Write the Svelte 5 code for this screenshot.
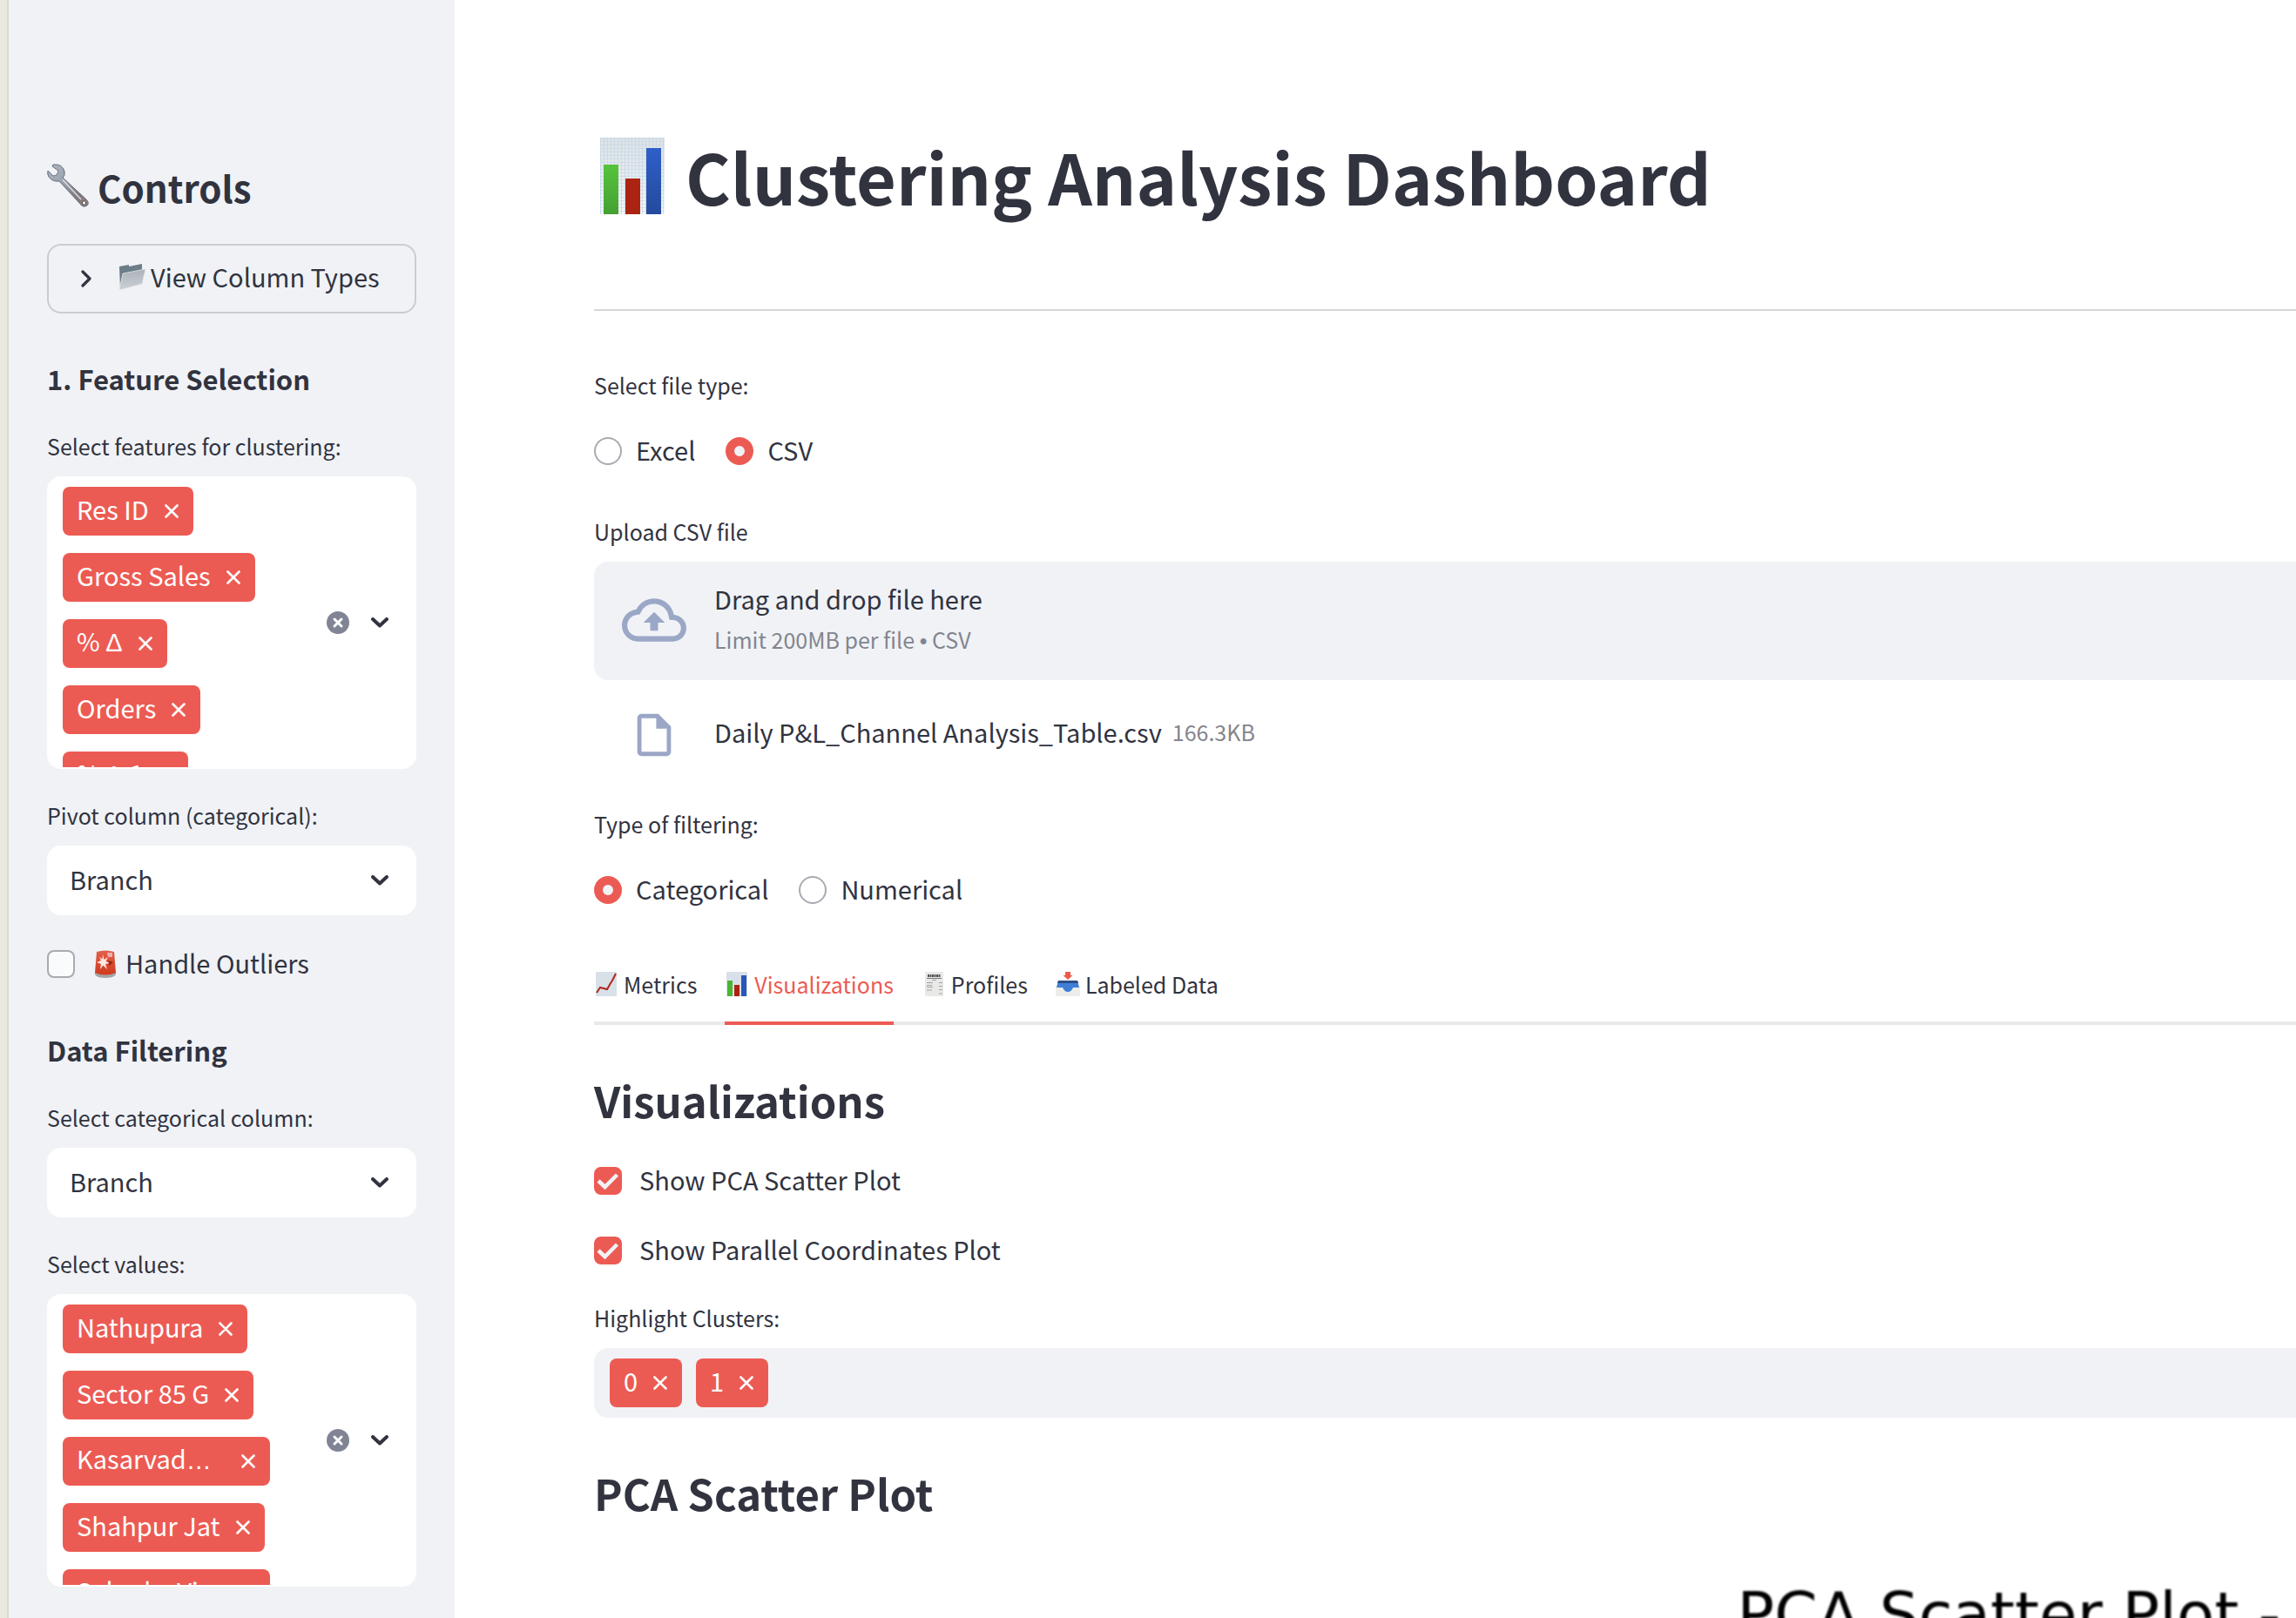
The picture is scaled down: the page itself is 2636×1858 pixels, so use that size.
<script>
  let fileType = $state('CSV');
  let filterType = $state('Categorical');
  let handleOutliers = $state(false);
  let showPca = $state(true);
  let showParallel = $state(true);
  let pivot = $state('Branch');
  let category = $state('Branch');
  let activeTab = $state('Visualizations');

  const features = [
    [{ t: 'Res ID' }],
    [{ t: 'Gross Sales' }],
    [{ t: '% ' }, { t: 'Δ', sym: true }],
    [{ t: 'Orders' }],
    [{ t: '% ' }, { t: 'Δ', sym: true }, { t: '.1' }],
  ];
  const values = [
    [{ t: 'Nathupura' }],
    [{ t: 'Sector 85 G' }],
    [{ t: 'Kasarvad' }, { t: '…', sym: true }],
    [{ t: 'Shahpur Jat' }],
    [{ t: 'Salunke Vi' }, { t: '…', sym: true }],
  ];
  const tabs = ['Metrics', 'Visualizations', 'Profiles', 'Labeled Data'];
</script>

{#snippet cross()}
  <svg class="cross" viewBox="0 0 16 16" aria-hidden="true">
    <path d="M1.5 1.5 14.5 14.5M14.5 1.5 1.5 14.5" fill="none" stroke="currentColor" stroke-width="2.6" stroke-linecap="round" />
  </svg>
{/snippet}

{#snippet chevron()}
  <svg class="chevron" viewBox="0 0 20 12" aria-hidden="true">
    <path d="M2 2 10 9.5 18 2" fill="none" stroke="currentColor" stroke-width="4" stroke-linecap="round" stroke-linejoin="round" />
  </svg>
{/snippet}

{#snippet tag(parts, wide)}
  <li class="tag" class:wide>
    <span class="tag-text">{#each parts as p}{#if p.sym}<span class="sym">{p.t}</span>{:else}{p.t}{/if}{/each}</span>
    <button type="button" aria-label="Remove">{@render cross()}</button>
  </li>
{/snippet}

{#snippet multi(items)}
  <div class="multi">
    <ul class="tags column">
      {#each items as parts}
        {@render tag(parts, parts.at(-1).t === '…')}
      {/each}
    </ul>
    <button type="button" class="plain" aria-label="Clear all">
      <svg class="clear" viewBox="0 0 26 26" aria-hidden="true">
        <circle cx="13" cy="13" r="13" fill="#808495" />
        <path d="M9 9 17 17M17 9 9 17" stroke="#fff" stroke-width="3" stroke-linecap="round" />
      </svg>
    </button>
    <button type="button" class="plain" aria-label="Open">{@render chevron()}</button>
  </div>
{/snippet}

{#snippet barChart()}
  <svg class="emoji-chart" viewBox="0 0 74 88" aria-hidden="true">
    <defs>
      <linearGradient id="paper" x1="0" y1="0" x2="0" y2="1"><stop offset="0" stop-color="#dde2e5" /><stop offset="1" stop-color="#f2f5f8" /></linearGradient>
      <pattern id="squares" width="4" height="4" patternUnits="userSpaceOnUse"><path d="M0 0H4M0 0V4" stroke="#bdd3e6" stroke-width="1.2" /></pattern>
      <linearGradient id="green" x1="0" y1="0" x2="0" y2="1"><stop offset="0" stop-color="#56c43c" /><stop offset="1" stop-color="#45a033" /></linearGradient>
      <linearGradient id="blue" x1="0" y1="0" x2="0" y2="1"><stop offset="0" stop-color="#2f5fca" /><stop offset="1" stop-color="#244a9c" /></linearGradient>
    </defs>
    <rect width="74" height="88" fill="url(#paper)" />
    <rect width="74" height="88" fill="url(#squares)" />
    <rect x="4" y="31" width="17" height="57" fill="url(#green)" />
    <rect x="29" y="47" width="17" height="41" fill="#ab2412" />
    <rect x="53" y="12" width="17" height="76" fill="url(#blue)" />
  </svg>
{/snippet}

{#snippet tabIcon(name)}
  {#if name === 'Metrics'}
    <svg viewBox="0 0 24 28" aria-hidden="true">
      <rect width="24" height="28" fill="#d8e0e8" />
      <path d="M1 24 5 18 13 20 17 13 19 10 23 2" fill="none" stroke="#b3261b" stroke-width="2" />
    </svg>
  {:else if name === 'Visualizations'}
    <svg viewBox="0 0 24 28" aria-hidden="true">
      <rect width="24" height="28" fill="#d8e1ea" />
      <rect x="1" y="10" width="6" height="18" fill="#4bb534" />
      <rect x="9" y="15" width="6" height="13" fill="#ab2412" />
      <rect x="17" y="4" width="6" height="24" fill="#2b57b8" />
    </svg>
  {:else if name === 'Profiles'}
    <svg viewBox="0 0 24 28" aria-hidden="true">
      <rect x="2" width="21" height="28" fill="#e9e9e7" />
      <path d="M5 4.500H20" stroke="#55555a" stroke-width="3" stroke-dasharray="2 .5" />
      <path d="M4 7.500H21" stroke="#77777a" stroke-width="1" />
      <path d="M10 9.500H15M4 12.500H11M18 12.500H22M4 15.500H10M4 17.500H11M18 16.500H22M4 21H10M18 20.500H22M18 25H22" stroke="#a3a3a5" stroke-width="1.200" />
    </svg>
  {:else}
    <svg class="tray" viewBox="0 0 28 28" aria-hidden="true">
      <path d="M4 10H24L28 18V26Q28 28 26 28H2Q0 28 0 26V18Z" fill="#ececea" />
      <path d="M3 10H25L27 18H20Q18 23 14 23T8 18H1Z" fill="#3f7fd6" />
      <path d="M3 10H25L26 13H2Z" fill="#2c4f86" />
      <path d="M11 0H17V4H19.500L14 9 8.500 4H11Z" fill="#ee5a4a" />
    </svg>
  {/if}
{/snippet}

<div class="app">
  <div class="edge"></div>

  <aside>
    <h2 class="controls">
      <svg viewBox="0 0 48 50" aria-hidden="true">
        <defs>
          <linearGradient id="steel" x1="0" y1="0" x2="1" y2="1"><stop offset="0" stop-color="#aeb9c4" /><stop offset=".4" stop-color="#9aa3ad" /><stop offset=".75" stop-color="#7d7679" /><stop offset="1" stop-color="#9b8480" /></linearGradient>
        </defs>
        <path d="M7 1Q18 0 20 9Q21 14 18 16L45 41Q49 45 46 48Q41 51 38 46L14 20Q6 21 2 15Q0 12 1 8L7 14Q12 14 13 8L6 3Z" fill="url(#steel)" stroke="#666d78" stroke-width="1" />
        <path d="M18 18.500 39 41" stroke="#d9dde1" stroke-width="1.500" />
        <circle cx="42.500" cy="45" r="2.200" fill="#f0f2f6" stroke="#554a4c" />
      </svg>
      Controls
    </h2>

    <button type="button" class="expander">
      <svg class="caret" viewBox="0 0 12 20" aria-hidden="true"><path d="M2 2 10 10 2 18" fill="none" stroke="currentColor" stroke-width="3.200" stroke-linecap="round" stroke-linejoin="round" /></svg>
      <svg class="folder" viewBox="0 0 32 30" aria-hidden="true">
        <defs><linearGradient id="flap" x1="0" y1="0" x2="0" y2="1"><stop offset="0" stop-color="#aab3ba" /><stop offset="1" stop-color="#ccd0d4" /></linearGradient></defs>
        <path d="M1 3 12 1V3L27 0V10L2 28Z" fill="#6c7c88" />
        <path d="M5 11 31 6 27 23 1 30Z" fill="url(#flap)" stroke="#dfe4e8" stroke-width=".8" />
      </svg>
      <span>View Column Types</span>
    </button>

    <h3>1. Feature Selection</h3>
    <p class="label">Select features for clustering:</p>
    {@render multi(features)}

    <label class="label next" for="pivot">Pivot column (categorical):</label>
    <div class="select">
      <select id="pivot" bind:value={pivot}><option>Branch</option></select>
      {@render chevron()}
    </div>

    <label class="check outliers">
      <input type="checkbox" bind:checked={handleOutliers} />
      <svg class="siren" viewBox="0 0 24 32" aria-hidden="true">
        <defs><linearGradient id="lamp" x1="0" y1="0" x2="0" y2="1"><stop offset="0" stop-color="#e2604a" /><stop offset="1" stop-color="#d03a1c" /></linearGradient></defs>
        <path d="M0 25H24V28Q22 32 12 32T0 28Z" fill="#a3a5a5" />
        <path d="M2 2Q12-1 22 2L24 26Q12 31 0 26Z" fill="url(#lamp)" />
        <path d="M14 3H20V8H15Z" fill="#f0b0a8" />
        <path d="M15 12 21 14 16 18Z" fill="#8d2416" />
        <path d="M9 5 10.500 11 15 8 12.500 13 17 15 12 16 14 22 9.500 17.500 6 22 7 16 2 14 7 12 5 8 8.500 10.500Z" fill="#ffe9e4" />
      </svg>
      <span>Handle Outliers</span>
    </label>

    <h3 class="filtering">Data Filtering</h3>
    <label class="label" for="category">Select categorical column:</label>
    <div class="select">
      <select id="category" bind:value={category}><option>Branch</option></select>
      {@render chevron()}
    </div>

    <p class="label next">Select values:</p>
    {@render multi(values)}
  </aside>

  <main>
    <h1>{@render barChart()}<span>Clustering Analysis Dashboard</span></h1>
    <hr />

    <fieldset>
      <legend class="label">Select file type:</legend>
      <div class="radios">
        {#each ['Excel', 'CSV'] as option}
          <label class="check radio"><input type="radio" name="file-type" value={option} bind:group={fileType} /><span>{option}</span></label>
        {/each}
      </div>
    </fieldset>

    <p class="label upload-label">Upload CSV file</p>
    <div class="dropzone">
      <svg viewBox="0 0 24 24" aria-hidden="true">
        <path fill="#9ba7c6" d="M19.350 10.040A7.490 7.490 0 0 0 12 4C9.110 4 6.600 5.640 5.350 8.040A5.994 5.994 0 0 0 0 14c0 3.310 2.690 6 6 6h13c2.760 0 5-2.240 5-5 0-2.640-2.050-4.780-4.650-4.960zM19 18H6c-2.210 0-4-1.790-4-4 0-2.050 1.530-3.760 3.560-3.970l1.070-.11.5-.95A5.469 5.469 0 0 1 12 6c2.620 0 4.880 1.860 5.390 4.430l.3 1.500 1.530.11A2.980 2.980 0 0 1 22 15c0 1.650-1.350 3-3 3zM8 13h2.550v3h2.900v-3H16l-4-4z" />
      </svg>
      <div>
        <p class="body">Drag and drop file here</p>
        <p class="hint">Limit 200MB per file <span class="sym">•</span> CSV</p>
      </div>
    </div>
    <div class="file">
      <svg viewBox="0 0 24 24" aria-hidden="true">
        <path fill="#9ba7c6" fill-rule="evenodd" d="M6 2c-1.100 0-2 .9-2 2v16c0 1.100.9 2 2 2h12c1.100 0 2-.9 2-2V8l-6-6H6zm0 2h7v5h5v11H6V4z" />
      </svg>
      <span class="body">Daily P&amp;L_Channel Analysis_Table.csv</span>
      <span class="hint">166.3KB</span>
    </div>

    <fieldset class="filter-type">
      <legend class="label">Type of filtering:</legend>
      <div class="radios">
        {#each ['Categorical', 'Numerical'] as option}
          <label class="check radio"><input type="radio" name="filter-type" value={option} bind:group={filterType} /><span>{option}</span></label>
        {/each}
      </div>
    </fieldset>

    <div class="tabs" role="tablist">
      {#each tabs as name}
        <button type="button" role="tab" aria-selected={activeTab === name} class:active={activeTab === name} onclick={() => (activeTab = name)}>
          {@render tabIcon(name)}{name}
        </button>
      {/each}
    </div>

    <h2 class="section">Visualizations</h2>
    <div class="checks">
      <label class="check"><input type="checkbox" bind:checked={showPca} /><span>Show PCA Scatter Plot</span></label>
      <label class="check"><input type="checkbox" bind:checked={showParallel} /><span>Show Parallel Coordinates Plot</span></label>
    </div>

    <p class="label clusters-label">Highlight Clusters:</p>
    <ul class="tags clusters">
      {@render tag([{ t: '0' }], false)}
      {@render tag([{ t: '1' }], false)}
    </ul>

    <h2 class="section">PCA Scatter Plot</h2>
    <figure><figcaption>PCA Scatter Plot -</figcaption></figure>
  </main>
</div>

<style>
  :global(body) {
    margin: 0;
    background: #fff;
  }
  .app,
  .app * {
    box-sizing: border-box;
  }
  .app {
    display: flex;
    height: 100vh;
    overflow: hidden;
    color: #31333f;
    font-family: 'Noto Sans CJK SC', 'Noto Sans', sans-serif;
    font-size: 29px;
    line-height: 29px;
  }
  svg {
    display: block;
    flex: none;
  }
  h1, h2, h3, p, ul, fieldset, figure {
    margin: 0;
    padding: 0;
    border: 0;
  }
  legend {
    padding: 0;
  }
  button,
  select {
    margin: 0;
    padding: 0;
    border: 0;
    background: none;
    color: inherit;
    font: inherit;
  }
  .sym {
    font-family: 'Liberation Sans', sans-serif;
  }
  .edge {
    flex: none;
    width: 10px;
    background: #e9e9e0;
    border-right: 2px solid #dcdccc;
  }
  aside {
    flex: none;
    width: 512px;
    padding: 186px 44px 0;
    background: #f0f2f6;
  }
  main {
    flex: 1;
    min-width: 0;
    padding: 149px 0 0 160px;
  }

  .controls {
    display: flex;
    align-items: center;
    gap: 10px;
    margin-bottom: 36px;
    font-size: 42px;
    line-height: 58px;
  }
  .controls svg {
    width: 48px;
    height: 50px;
    margin-bottom: 4px;
  }
  .expander {
    display: flex;
    align-items: center;
    width: 100%;
    height: 80px;
    padding-left: 37px;
    border: 2px solid #cbccd1;
    border-radius: 16px;
    text-align: left;
  }
  .caret {
    width: 12px;
    height: 20px;
    margin-right: 31px;
  }
  .folder {
    width: 32px;
    height: 30px;
    margin: 0 5px 4px 0;
  }
  .expander span {
    padding-bottom: 6px;
  }
  h3 {
    margin: 53px 0 38px;
    font-size: 31px;
    line-height: 44px;
  }
  h3.filtering {
    margin-top: 61px;
  }
  .label {
    display: block;
    font-size: 25px;
    line-height: 34px;
    margin-bottom: 18px;
  }
  .label.next {
    margin-top: 36px;
  }
  .multi {
    display: flex;
    align-items: center;
    height: 336px;
    padding: 0 32px 0 18px;
    border-radius: 16px;
    background: #fff;
  }
  .tags {
    display: flex;
    gap: 16px;
    list-style: none;
  }
  .tags.column {
    flex: 1;
    flex-direction: column;
    align-items: flex-start;
    gap: 20px;
    height: 332px;
    padding-top: 10px;
    overflow: hidden;
  }
  .tag {
    display: flex;
    flex: none;
    align-items: center;
    gap: 18px;
    height: 56px;
    padding: 0 17px 0 16px;
    border-radius: 8px;
    background: #ec5b53;
    color: #fff;
    white-space: nowrap;
  }
  .tag.wide {
    width: 238px;
    justify-content: space-between;
  }
  .tag-text {
    padding-bottom: 5px;
  }
  .cross {
    width: 16px;
    height: 16px;
  }
  .clear {
    width: 26px;
    height: 26px;
    margin-right: 25px;
  }
  .chevron {
    width: 20px;
    height: 12px;
  }
  .select {
    display: grid;
    align-items: center;
    border-radius: 16px;
    background: #fff;
  }
  .select > :global(*) {
    grid-area: 1 / 1;
  }
  .select select {
    width: 100%;
    height: 80px;
    padding: 0 60px 3px 26px;
    appearance: none;
  }
  .select .chevron {
    justify-self: end;
    margin-right: 32px;
    pointer-events: none;
  }

  .check {
    display: flex;
    align-items: flex-start;
    gap: 20px;
  }
  .check.radio {
    gap: 16px;
  }
  .check input {
    flex: none;
    width: 32px;
    height: 32px;
    margin: 0;
    appearance: none;
    border: 2px solid #a9abb2;
    border-radius: 8px;
    background: #fafbfd;
  }
  .check input[type='radio'] {
    border-radius: 50%;
    background: #fff;
  }
  .check input[type='radio']:checked {
    border: 10px solid #ec5b53;
    background: #f0f2f6;
  }
  .check input[type='checkbox']:checked {
    border-color: #ec5b53;
    background: #ec5b53 url("data:image/svg+xml,%3Csvg xmlns='http://www.w3.org/2000/svg' viewBox='0 0 28 28'%3E%3Cpath d='M3 14 10.500 21 24.500 7' fill='none' stroke='%23f0f2f6' stroke-width='4.500'/%3E%3C/svg%3E") center / 28px 28px no-repeat;
  }
  .outliers {
    gap: 11px;
    margin-top: 40px;
  }
  .outliers .siren {
    width: 24px;
    height: 32px;
    margin-left: 12px;
  }

  h1 {
    display: flex;
    align-items: center;
    gap: 24px;
    padding-left: 7px;
    font-size: 79px;
    line-height: 106px;
    white-space: nowrap;
  }
  .emoji-chart {
    width: 74px;
    height: 88px;
  }
  hr {
    height: 2px;
    margin: 100px 0 68px;
    border: 0;
    background: #d6d6d9;
  }
  fieldset .label {
    margin-bottom: 43px;
  }
  .radios {
    display: flex;
    gap: 35px;
  }
  .upload-label {
    margin-top: 59px;
  }
  .dropzone {
    display: flex;
    align-items: center;
    gap: 32px;
    height: 136px;
    padding: 0 0 2px 32px;
    border-radius: 16px 0 0 16px;
    background: #f0f2f6;
  }
  .dropzone svg {
    width: 74px;
    height: 74px;
  }
  .dropzone p {
    line-height: 47px;
  }
  .hint {
    color: #83858e;
    font-size: 25px;
  }
  .file {
    display: flex;
    align-items: flex-start;
    margin-top: 34px;
    padding-left: 40px;
    line-height: 50px;
  }
  .file svg {
    width: 58px;
    height: 58px;
  }
  .file .body {
    margin: 0 12px 0 40px;
  }
  .filter-type {
    margin-top: 56px;
  }
  .tabs {
    display: flex;
    gap: 32px;
    margin-top: 75px;
    box-shadow: inset 0 -4px #e9e9eb;
    font-size: 25px;
    line-height: 34px;
  }
  .tabs button {
    display: flex;
    align-items: center;
    gap: 8px;
    padding-bottom: 26px;
    border-bottom: 4px solid transparent;
  }
  .tabs button.active {
    border-color: #ec5b53;
    color: #ec5b53;
  }
  .tabs svg {
    width: 24px;
    height: 28px;
    margin-left: 2px;
  }
  .tabs svg.tray {
    width: 28px;
    margin: 0 -2px 0 0;
  }
  .section {
    margin-top: 52px;
    font-size: 49px;
    line-height: 68px;
  }
  .checks {
    display: grid;
    gap: 48px;
    margin-top: 43px;
  }
  .clusters-label {
    margin-top: 44px;
  }
  .clusters {
    padding: 12px 18px;
    border-radius: 16px 0 0 16px;
    background: #f0f2f6;
  }
  figure {
    margin-top: 67px;
    padding-left: 67%;
    overflow: hidden;
  }
  figcaption {
    padding-left: 3px;
    color: #000;
    font-family: 'DejaVu Sans', sans-serif;
    font-size: 71px;
    line-height: 80px;
    white-space: nowrap;
    filter: blur(1px);
  }
</style>
